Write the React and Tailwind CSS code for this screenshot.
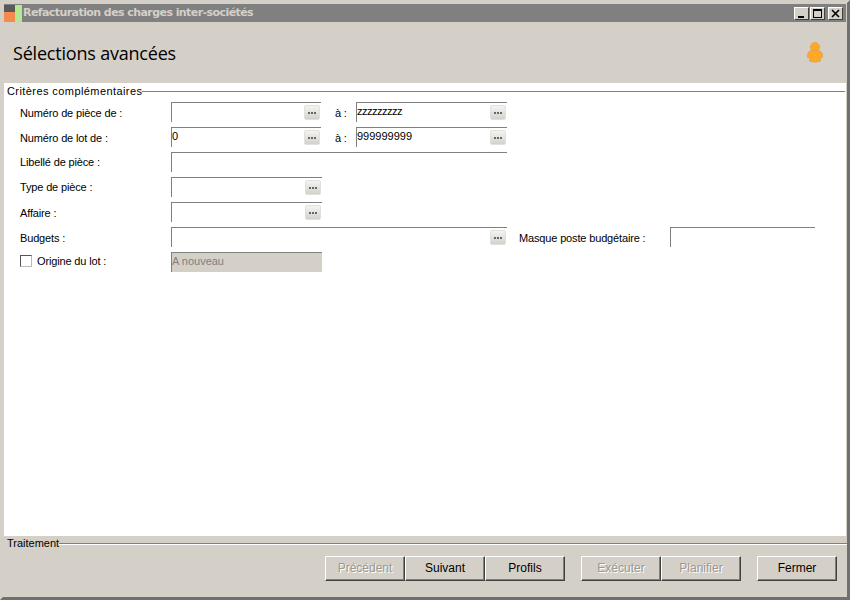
const PickerButton = () => (
  <div className="w-[16px] h-[15px] mt-[2px] mr-[1px] rounded-[2px] bg-gradient-to-b from-[#f4f4f2] to-[#d4d2cc] border border-[#e2e0da] flex items-center justify-center gap-[1px]">
    <span className="w-[2px] h-[2px] bg-[#666]" />
    <span className="w-[2px] h-[2px] bg-[#666]" />
    <span className="w-[2px] h-[2px] bg-[#666]" />
  </div>
);

const Input = ({ width, value, picker, disabled, valueClass = "tracking-normal" }) => (
  <div
    className={`h-[20px] flex justify-between border-t border-l border-[#808080] ${disabled ? "bg-[#d4d0c8] text-[#808080]" : "bg-white text-black"}`}
    style={{ width }}
  >
    <span className={`leading-[17px] whitespace-nowrap ${valueClass}`}>{value}</span>
    {picker && <PickerButton />}
  </div>
);

const Row = ({ label, labelClass = "pt-[3px]", children }) => (
  <div className="h-[25px] flex items-start">
    <div className={`w-[167px] shrink-0 pl-[16px] whitespace-nowrap ${labelClass}`}>{label}</div>
    {children}
  </div>
);

const RangeTo = ({ value, valueClass }) => (
  <>
    <div className="w-[35px] shrink-0 pl-[14px] pt-[3px]">à :</div>
    <Input width={151} value={value} valueClass={valueClass} picker />
  </>
);

const Btn = ({ children, disabled }) => (
  <button
    className={`w-[80px] h-[25px] pb-[2px] text-[12px] tracking-normal bg-[#d4d0c8] border border-t-white border-l-white border-r-[#404040] border-b-[#404040] shadow-[inset_-1px_-1px_0_#808080] ${disabled ? "text-[#9a9890] [text-shadow:1px_1px_0_#fff]" : "text-black"}`}
  >
    {children}
  </button>
);

const CaptionButton = ({ className = "", children }) => (
  <div className={`w-[15px] h-[13px] bg-[#d4d0c8] border border-t-white border-l-white border-r-[#404040] border-b-[#404040] flex ${className}`}>
    {children}
  </div>
);

export default function App() {
  return (
    <div className="w-[850px] h-[600px] flex flex-col bg-[#d4d0c8] border-[3px] border-[#d4d0c8] border-r-[#707070] border-b-[#707070] text-[11px] tracking-[-0.15px] font-['Liberation_Sans',sans-serif] text-black overflow-hidden">
      {/* barre de titre */}
      <div className="h-[18px] mt-px mx-px shrink-0 bg-[#808080] flex items-center">
        <svg width="18" height="17" viewBox="0 0 18 17" className="shrink-0">
          <rect x="0" y="0" width="11" height="7" fill="#5a5a5a" />
          <rect x="0" y="7" width="11" height="10" fill="#f58a4f" />
          <rect x="11" y="0" width="7" height="17" fill="#b4e890" />
        </svg>
        <span className="ml-px font-['DejaVu_Sans',sans-serif] font-bold text-[11px] text-[#d4d0c8] whitespace-nowrap tracking-[-0.57px]">
          Refacturation des charges inter-sociétés
        </span>
        <div className="ml-auto flex mr-[3px]">
          <CaptionButton className="items-end pl-[3px] pb-[1px]">
            <span className="w-[6px] h-[2px] bg-black" />
          </CaptionButton>
          <CaptionButton className="ml-px items-center justify-center">
            <span className="w-[9px] h-[9px] border border-t-2 border-black" />
          </CaptionButton>
          <CaptionButton className="ml-[3px] items-center justify-center">
            <svg width="9" height="9" viewBox="0 0 9 9">
              <path d="M1 1 L8 8 M8 1 L1 8" stroke="#000" strokeWidth="1.6" />
            </svg>
          </CaptionButton>
        </div>
      </div>

      {/* en-tête */}
      <div className="h-[61px] shrink-0 flex items-center justify-between pl-[10px] pr-[24px]">
        <h1 className="text-[18px] leading-none font-['Open_Sans',sans-serif] tracking-[-0.2px]">Sélections avancées</h1>
        <svg width="16" height="21" viewBox="0 0 16 21">
          <circle cx="8" cy="5" r="4.6" fill="#ffa726" stroke="#d9a050" strokeWidth="0.6" />
          <path d="M4 8.5 H12 Q15.5 9.5 15.5 13 V15.5 H13.5 V19 Q8 21.5 2.5 19 V15.5 H0.5 V13 Q0.5 9.5 4 8.5 Z" fill="#ffa726" stroke="#d9a050" strokeWidth="0.6" />
        </svg>
      </div>

      {/* critères */}
      <div className="flex-1 mx-px bg-white">
        <div className="flex items-center h-[16px] pl-[3px]">
          <span className="whitespace-nowrap tracking-[0.42px]">Critères complémentaires</span>
          <div className="flex-1 border-t border-[#808080] mr-[1px]" />
        </div>
        <div className="pt-[3px]">
          <Row label="Numéro de pièce de :">
            <Input width={150} picker />
            <RangeTo value="zzzzzzzzz" valueClass="tracking-[-0.5px]" />
          </Row>
          <Row label="Numéro de lot de :">
            <Input width={150} value="0" picker />
            <RangeTo value="999999999" />
          </Row>
          <Row label="Libellé de pièce :" labelClass="pt-[2px]">
            <Input width={336} />
          </Row>
          <Row label="Type de pièce :" labelClass="pt-[2px]">
            <Input width={151} picker />
          </Row>
          <Row label="Affaire :">
            <Input width={151} picker />
          </Row>
          <Row label="Budgets :">
            <Input width={336} picker />
            <div className="w-[163px] shrink-0 pl-[12px] pt-[3px] whitespace-nowrap">Masque poste budgétaire :</div>
            <Input width={145} />
          </Row>
          <div className="h-[25px] flex items-start">
            <div className="w-[167px] shrink-0 pl-[16px] pt-[3px] flex items-start gap-[5px] whitespace-nowrap">
              <span className="w-[12px] h-[12px] bg-white border border-t-[#555] border-l-[#555] border-r-[#bbb] border-b-[#bbb]" />
              <span className="leading-[12px]">Origine du lot :</span>
            </div>
            <Input width={151} value="A nouveau" disabled />
          </div>
        </div>
      </div>

      {/* traitement */}
      <div className="h-[61px] shrink-0 pl-[4px]">
        <div className="flex items-center h-[14px]">
          <span className="whitespace-nowrap tracking-normal">Traitement</span>
          <div className="flex-1 border-t border-[#808080] shadow-[0_1px_0_#fff]" />
        </div>
        <div className="flex justify-end pt-[6px] pr-[10px]">
          <Btn disabled>Précédent</Btn>
          <Btn>Suivant</Btn>
          <Btn>Profils</Btn>
          <div className="w-[16px]" />
          <Btn disabled>Exécuter</Btn>
          <Btn disabled>Planifier</Btn>
          <div className="w-[16px]" />
          <Btn>Fermer</Btn>
        </div>
      </div>
    </div>
  );
}
